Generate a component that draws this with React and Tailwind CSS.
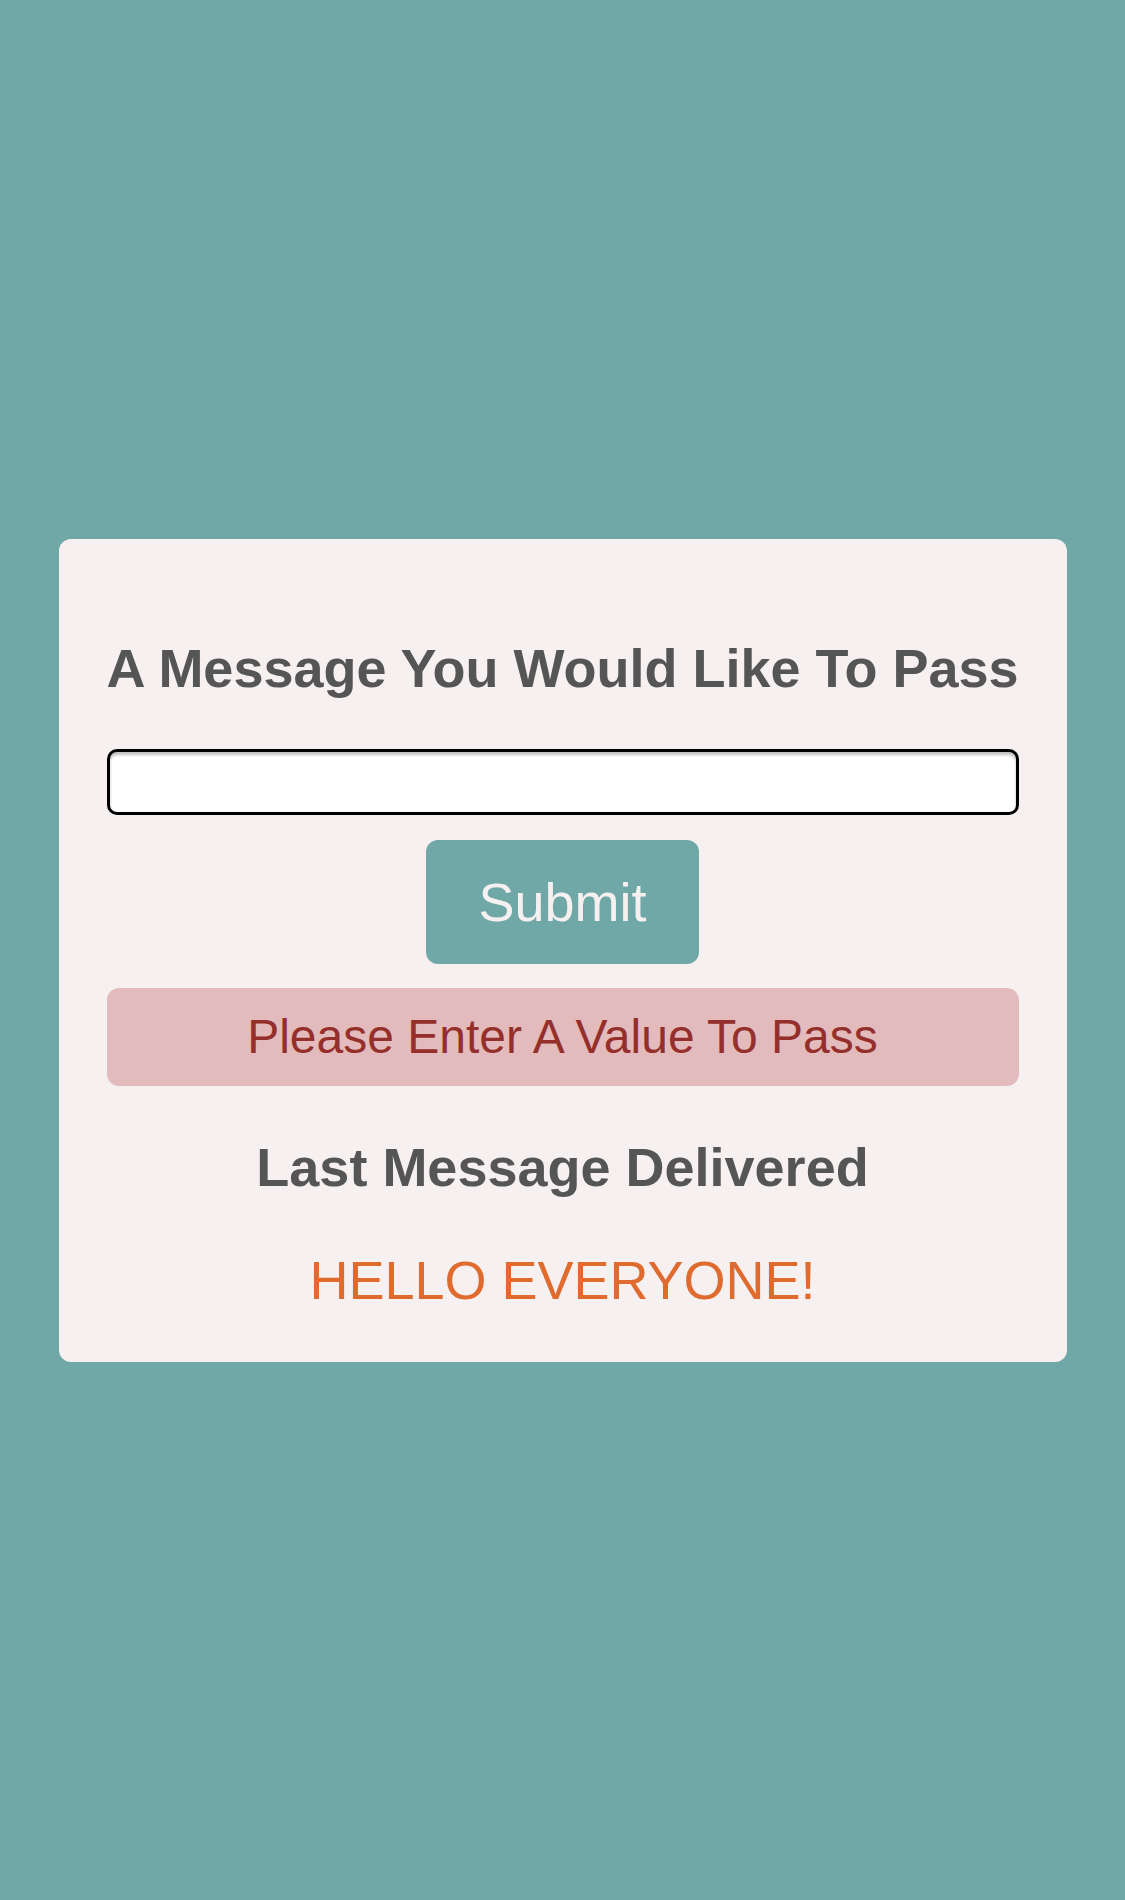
import { useState } from 'react';

export default function App() {
  const [value, setValue] = useState('');

  return (
    <div className="min-h-screen bg-[#6fa8a7] flex items-center justify-center font-['Liberation_Sans',Arial,sans-serif]">
      <div className="w-[1008px] bg-[#f6f0f0] rounded-[12px] pt-[99px] pb-[51px] px-[48px] flex flex-col items-center">
        <h1 className="text-[54px] leading-[61px] font-bold text-[#555555] text-center whitespace-nowrap">
          A Message You Would Like To Pass
        </h1>

        <input
          type="text"
          value={value}
          onChange={(e) => setValue(e.target.value)}
          className="mt-[50px] w-full h-[66px] bg-white border-[3px] border-black rounded-[10px] shadow-[inset_0_3px_3px_rgba(0,0,0,0.25)] px-3 text-[40px] outline-none"
        />

        <button className="mt-[25px] w-[273px] h-[124px] bg-[#6fa8a7] rounded-[12px] text-[54px] leading-none text-[#f6f0f0] flex items-center justify-center">
          Submit
        </button>

        <div className="mt-[24px] w-full h-[98px] bg-[#e3bbbc] rounded-[12px] flex items-center justify-center text-[48px] text-[#952f2b]">
          Please Enter A Value To Pass
        </div>

        <h2 className="mt-[51px] text-[54px] leading-[61px] font-bold text-[#555555] text-center">
          Last Message Delivered
        </h2>

        <p className="mt-[51px] text-[54px] leading-[62px] text-[#e06b2e] text-center">
          HELLO EVERYONE!
        </p>
      </div>
    </div>
  );
}
